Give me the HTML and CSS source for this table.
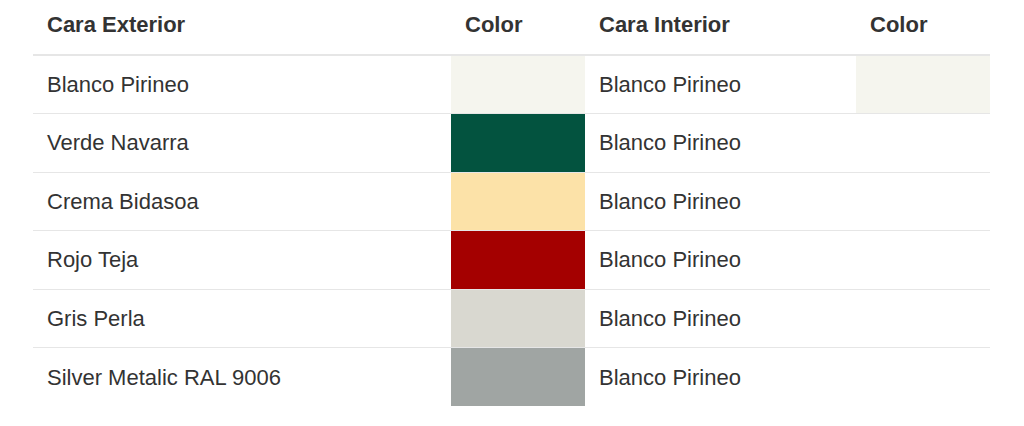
FILE: index.html
```html
<!DOCTYPE html>
<html lang="es">
<head>
<meta charset="utf-8">
<title>Colores</title>
<link rel="stylesheet" href="styles.css">
</head>
<body>
<table class="colors">
  <colgroup>
    <col class="c-ext">
    <col class="c-sw">
    <col class="c-int">
    <col class="c-sw">
  </colgroup>
  <thead>
    <tr>
      <th>Cara Exterior</th>
      <th>Color</th>
      <th>Cara Interior</th>
      <th>Color</th>
    </tr>
  </thead>
  <tbody>
    <tr>
      <td>Blanco Pirineo</td>
      <td class="sw blanco"></td>
      <td>Blanco Pirineo</td>
      <td class="sw blanco"></td>
    </tr>
    <tr>
      <td>Verde Navarra</td>
      <td class="sw verde"></td>
      <td>Blanco Pirineo</td>
      <td></td>
    </tr>
    <tr>
      <td>Crema Bidasoa</td>
      <td class="sw crema"></td>
      <td>Blanco Pirineo</td>
      <td></td>
    </tr>
    <tr>
      <td>Rojo Teja</td>
      <td class="sw rojo"></td>
      <td>Blanco Pirineo</td>
      <td></td>
    </tr>
    <tr>
      <td>Gris Perla</td>
      <td class="sw gris"></td>
      <td>Blanco Pirineo</td>
      <td></td>
    </tr>
    <tr>
      <td>Silver Metalic RAL 9006</td>
      <td class="sw silver"></td>
      <td>Blanco Pirineo</td>
      <td></td>
    </tr>
  </tbody>
</table>
</body>
</html>
```
FILE: styles.css
```css
html, body {
  margin: 0;
  padding: 0;
  background: #ffffff;
}

body {
  font-family: "Liberation Sans", Arial, Helvetica, sans-serif;
  font-size: 22px;
  color: #333333;
}

.colors {
  margin-left: 33px;
  width: 957px;
  border-collapse: collapse;
  table-layout: fixed;
}

.c-ext { width: 418px; }
.c-sw { width: 134px; }
.c-int { width: 271px; }

.colors th {
  text-align: left;
  font-weight: bold;
  line-height: 31px;
  padding: 9px 14px 14px;
  border-bottom: 2px solid #e6e6e6;
  color: #333333;
}

.colors td {
  line-height: 31px;
  padding: 0 14px;
  height: 58.5px;
  box-sizing: border-box;
  vertical-align: middle;
  border-top: 1px solid #e6e6e6;
}

.colors thead + tbody tr:first-child td {
  border-top: 0;
}

.blanco { background: #f5f5ee; }
.verde { background: #03533f; }
.crema { background: #fce2a8; }
.rojo { background: #a40000; }
.gris { background: #d9d8d0; }
.silver { background: #a0a5a3; }
```
